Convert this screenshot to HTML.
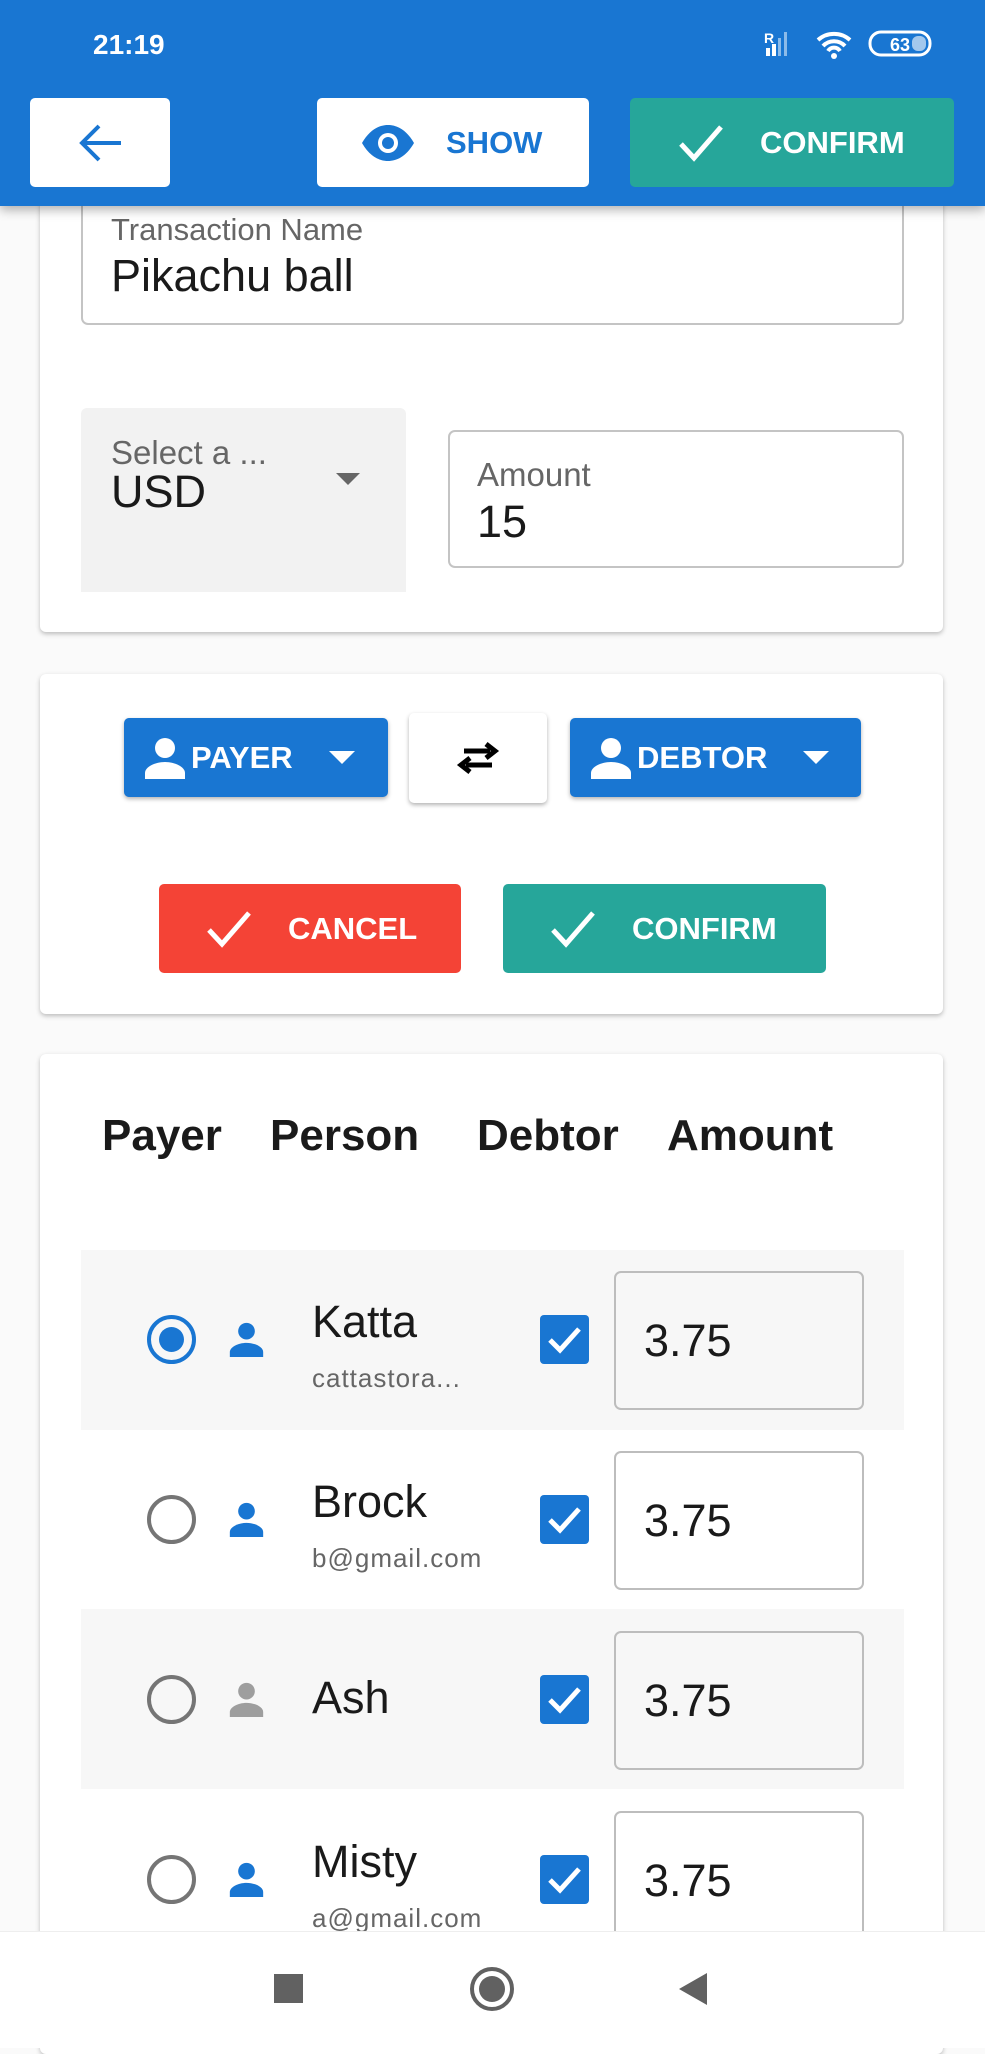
<!DOCTYPE html>
<html><head><meta charset="utf-8"><style>
*{margin:0;padding:0;box-sizing:border-box}
body{width:985px;height:2048px;position:relative;overflow:hidden;background:#fafafa;font-family:"Liberation Sans",sans-serif;color:#1a1a1a}
.a{position:absolute}
.card{position:absolute;background:#fff;border-radius:6px;box-shadow:0 2px 5px rgba(0,0,0,.25)}
.btn{position:absolute;border-radius:5px;display:flex;align-items:center;color:#fff;font-size:31px;font-weight:bold;letter-spacing:0}
.row{position:absolute;left:81px;width:823px;height:180px}
.radio{position:absolute;left:147px;width:49px;height:49px;border-radius:50%;border:4px solid #757575}
.name{position:absolute;left:312px;font-size:45px}
.mail{position:absolute;left:312px;font-size:26px;color:#666;letter-spacing:1px}
.chk{position:absolute;left:540px;width:49px;height:49px;background:#1976d2;border-radius:4px}
.inp{position:absolute;left:614px;width:250px;height:139px;border:2px solid #bdbdbd;border-radius:7px;font-size:45px;padding-left:28px;display:flex;align-items:center}
</style></head><body>
<div class="a" style="left:0;top:0;width:985px;height:206px;background:#1976d2;box-shadow:0 4px 10px rgba(0,0,0,.3);z-index:5">
 <div class="a" style="left:93px;top:29px;color:#fff;font-size:28px;font-weight:bold">21:19</div>
 <div class="a" style="left:764px;top:30px;color:#fff;font-size:14px;font-weight:bold">R</div>
 <svg class="a" style="left:764px;top:28px" width="170" height="32"><g fill="#fff"><rect x="2" y="20" width="4" height="8"/><rect x="8" y="16" width="4" height="12"/><rect x="14" y="10" width="3" height="18" opacity=".5"/><rect x="20" y="4" width="3" height="24" opacity=".5"/></g>
 <path d="M54 12a24 24 0 0 1 32 0M59 18a15 15 0 0 1 22 0M64 23a7 7 0 0 1 12 0" stroke="#fff" stroke-width="4" fill="none"/><circle cx="70" cy="28" r="3" fill="#fff"/>
 <rect x="106" y="4" width="60" height="23" rx="11" fill="none" stroke="#fff" stroke-width="3"/><rect x="148" y="8" width="14" height="15" rx="6" fill="#fff" opacity=".6"/><text x="126" y="23" fill="#fff" font-size="18" font-weight="bold" font-family="Liberation Sans">63</text></svg>
 <div class="btn" style="left:30px;top:98px;width:140px;height:89px;background:#fff;justify-content:center"><svg width="46" height="40" viewBox="0 0 46 40"><path d="M44 20H5M22 3L5 20l17 17" stroke="#1976d2" stroke-width="4" fill="none"/></svg></div>
 <div class="btn" style="left:317px;top:98px;width:272px;height:89px;background:#fff;color:#1976d2"><svg style="margin-left:43px" width="56" height="40" viewBox="0 0 56 40"><path d="M2 20C10 6 20 2 28 2s18 4 26 18c-8 14-18 18-26 18S10 34 2 20z" fill="#1976d2"/><circle cx="28" cy="20" r="10" fill="#fff"/><circle cx="28" cy="20" r="6" fill="#1976d2"/></svg><span style="margin-left:30px">SHOW</span></div>
 <div class="btn" style="left:630px;top:98px;width:324px;height:89px;background:#26a69a"><svg style="margin-left:48px" width="46" height="40"><path d="M3 21l13 14L43 4" stroke="#fff" stroke-width="5" fill="none"/></svg><span style="margin-left:36px">CONFIRM</span></div>
</div>

<div class="card" style="left:40px;top:150px;width:903px;height:482px">
 <div class="a" style="left:41px;top:40px;width:823px;height:135px;border:2px solid #c4c4c4;border-radius:7px"></div>
 <div class="a" style="left:71px;top:62px;font-size:31px;color:#666">Transaction Name</div>
 <div class="a" style="left:71px;top:100px;font-size:45px">Pikachu ball</div>
 <div class="a" style="left:41px;top:258px;width:325px;height:184px;background:#f2f2f2;border-radius:6px 6px 0 0"></div>
 <div class="a" style="left:71px;top:284px;font-size:33px;color:#666">Select a ...</div>
 <div class="a" style="left:71px;top:316px;font-size:45px">USD</div>
 <div class="a" style="left:296px;top:323px;border-left:12px solid transparent;border-right:12px solid transparent;border-top:12px solid #666"></div>
 <div class="a" style="left:408px;top:280px;width:456px;height:138px;border:2px solid #c4c4c4;border-radius:7px"></div>
 <div class="a" style="left:437px;top:306px;font-size:33px;color:#666">Amount</div>
 <div class="a" style="left:437px;top:346px;font-size:45px">15</div>
</div>

<div class="card" style="left:40px;top:674px;width:903px;height:340px">
 <div class="btn" style="left:84px;top:44px;width:264px;height:79px;background:#1976d2;box-shadow:0 2px 4px rgba(0,0,0,.3)"><svg style="margin-left:20px" width="42" height="42" viewBox="0 0 42 42"><circle cx="21" cy="11" r="10" fill="#fff"/><path d="M1 42v-6c0-6 10-11 20-11s20 5 20 11v6z" fill="#fff"/></svg><span style="margin-left:5px">PAYER</span><div style="margin-left:36px;border-left:13px solid transparent;border-right:13px solid transparent;border-top:13px solid #fff"></div></div>
 <div class="btn" style="left:369px;top:39px;width:138px;height:90px;background:#fff;box-shadow:0 2px 4px rgba(0,0,0,.3);justify-content:center"><svg width="44" height="36" viewBox="0 0 44 36"><path d="M8 11h26M30 4l9 7-9 7" stroke="#000" stroke-width="5" fill="none"/><path d="M36 25H10M14 18l-9 7 9 7" stroke="#000" stroke-width="5" fill="none"/></svg></div>
 <div class="btn" style="left:530px;top:44px;width:291px;height:79px;background:#1976d2;box-shadow:0 2px 4px rgba(0,0,0,.3)"><svg style="margin-left:20px" width="42" height="42" viewBox="0 0 42 42"><circle cx="21" cy="11" r="10" fill="#fff"/><path d="M1 42v-6c0-6 10-11 20-11s20 5 20 11v6z" fill="#fff"/></svg><span style="margin-left:5px">DEBTOR</span><div style="margin-left:36px;border-left:13px solid transparent;border-right:13px solid transparent;border-top:13px solid #fff"></div></div>
 <div class="btn" style="left:119px;top:210px;width:302px;height:89px;background:#f44336"><svg style="margin-left:47px" width="46" height="40"><path d="M3 21l13 14L43 4" stroke="#fff" stroke-width="5" fill="none"/></svg><span style="margin-left:36px">CANCEL</span></div>
 <div class="btn" style="left:463px;top:210px;width:323px;height:89px;background:#26a69a"><svg style="margin-left:47px" width="46" height="40"><path d="M3 21l13 14L43 4" stroke="#fff" stroke-width="5" fill="none"/></svg><span style="margin-left:36px">CONFIRM</span></div>
</div>

<div class="card" style="left:40px;top:1054px;width:903px;height:1000px"></div>
<div class="a" style="left:102px;top:1111px;font-size:44px;font-weight:bold">Payer</div>
<div class="a" style="left:270px;top:1111px;font-size:44px;font-weight:bold">Person</div>
<div class="a" style="left:477px;top:1111px;font-size:44px;font-weight:bold">Debtor</div>
<div class="a" style="left:667px;top:1111px;font-size:44px;font-weight:bold">Amount</div>

<div class="row" style="top:1250px;background:#f7f7f7"></div>
<div class="row" style="top:1609px;background:#f7f7f7"></div>

<div class="radio" style="top:1315px;border-color:#1976d2"><div style="position:absolute;left:8px;top:8px;width:25px;height:25px;border-radius:50%;background:#1976d2"></div></div>
<svg class="a" style="left:229px;top:1322px" width="35" height="35" viewBox="0 0 42 42"><circle cx="21" cy="11" r="10" fill="#1976d2"/><path d="M1 42v-6c0-6 10-11 20-11s20 5 20 11v6z" fill="#1976d2"/></svg>
<div class="name" style="top:1296px">Katta</div>
<div class="mail" style="top:1363px">cattastora...</div>
<div class="chk" style="top:1315px"><svg width="49" height="49"><path d="M10 25l10 10 19-21" stroke="#fff" stroke-width="5" fill="none"/></svg></div>
<div class="inp" style="top:1271px;background:#f7f7f7">3.75</div>

<div class="radio" style="top:1495px"></div>
<svg class="a" style="left:229px;top:1502px" width="35" height="35" viewBox="0 0 42 42"><circle cx="21" cy="11" r="10" fill="#1976d2"/><path d="M1 42v-6c0-6 10-11 20-11s20 5 20 11v6z" fill="#1976d2"/></svg>
<div class="name" style="top:1476px">Brock</div>
<div class="mail" style="top:1543px">b@gmail.com</div>
<div class="chk" style="top:1495px"><svg width="49" height="49"><path d="M10 25l10 10 19-21" stroke="#fff" stroke-width="5" fill="none"/></svg></div>
<div class="inp" style="top:1451px;background:#fff">3.75</div>

<div class="radio" style="top:1675px"></div>
<svg class="a" style="left:229px;top:1682px" width="35" height="35" viewBox="0 0 42 42"><circle cx="21" cy="11" r="10" fill="#9e9e9e"/><path d="M1 42v-6c0-6 10-11 20-11s20 5 20 11v6z" fill="#9e9e9e"/></svg>
<div class="name" style="top:1672px">Ash</div>
<div class="chk" style="top:1675px"><svg width="49" height="49"><path d="M10 25l10 10 19-21" stroke="#fff" stroke-width="5" fill="none"/></svg></div>
<div class="inp" style="top:1631px;background:#f7f7f7">3.75</div>

<div class="radio" style="top:1855px"></div>
<svg class="a" style="left:229px;top:1862px" width="35" height="35" viewBox="0 0 42 42"><circle cx="21" cy="11" r="10" fill="#1976d2"/><path d="M1 42v-6c0-6 10-11 20-11s20 5 20 11v6z" fill="#1976d2"/></svg>
<div class="name" style="top:1836px">Misty</div>
<div class="mail" style="top:1903px">a@gmail.com</div>
<div class="chk" style="top:1855px"><svg width="49" height="49"><path d="M10 25l10 10 19-21" stroke="#fff" stroke-width="5" fill="none"/></svg></div>
<div class="inp" style="top:1811px;background:#fff">3.75</div>

<div class="a" style="left:0;top:1931px;width:985px;height:117px;background:#fff;border-top:1px solid #eee">
 <div class="a" style="left:274px;top:42px;width:29px;height:29px;background:#616161"></div>
 <div class="a" style="left:470px;top:35px;width:44px;height:44px;border-radius:50%;border:4px solid #616161"><div style="position:absolute;left:5px;top:5px;width:26px;height:26px;border-radius:50%;background:#616161"></div></div>
 <div class="a" style="left:679px;top:41px;border-top:16px solid transparent;border-bottom:16px solid transparent;border-right:28px solid #616161"></div>
</div>
</body></html>
